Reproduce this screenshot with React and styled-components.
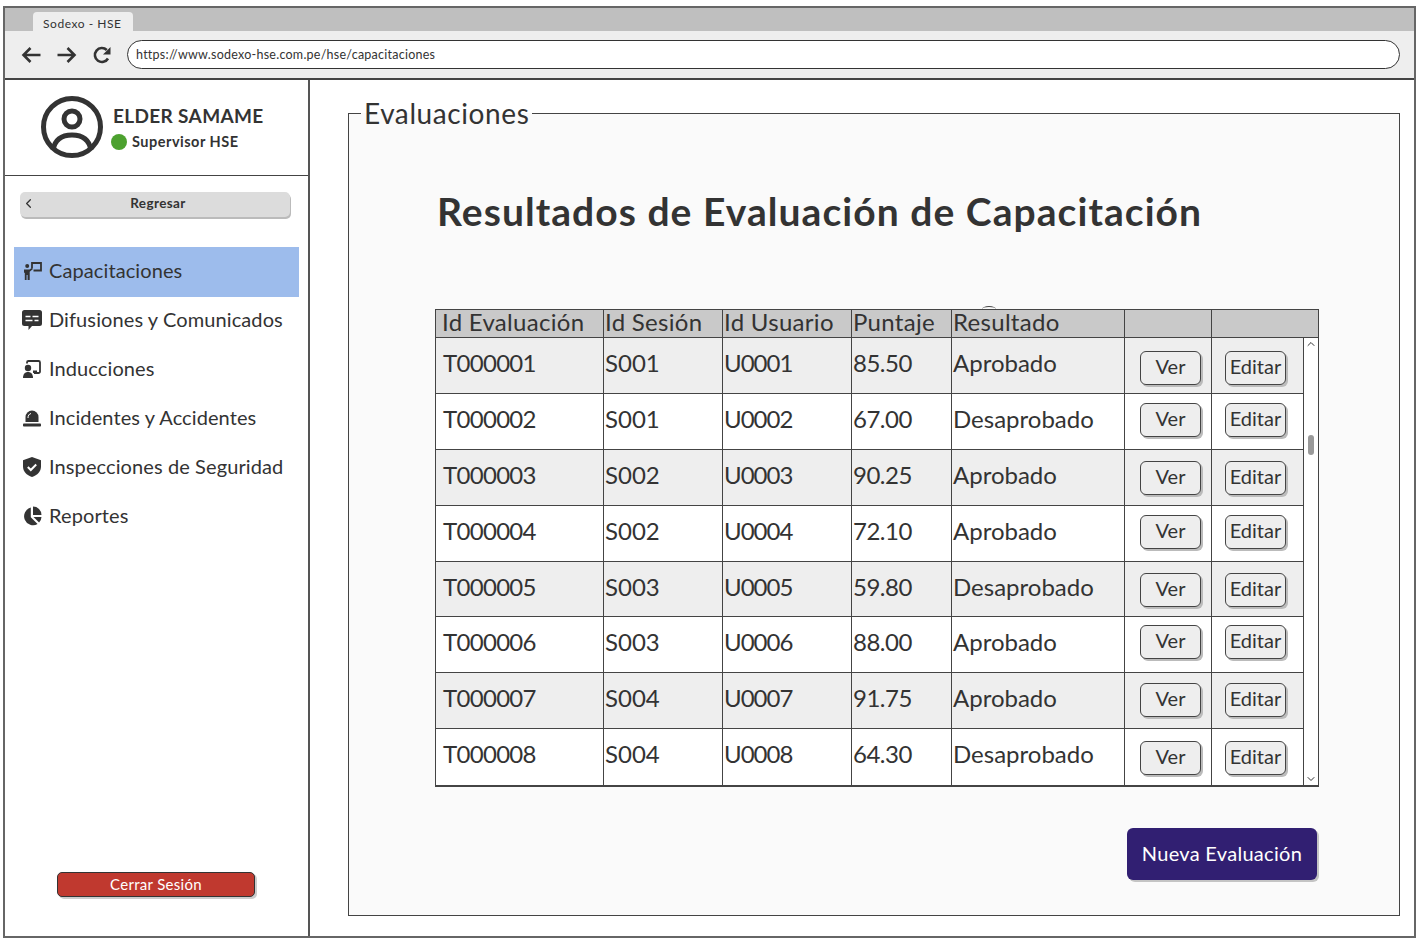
import React from 'react';
import styled, { createGlobalStyle } from 'styled-components';
import { LuChevronLeft, LuChevronUp, LuChevronDown } from 'react-icons/lu';

const GlobalStyle = createGlobalStyle`
  html, body {
    margin: 0;
    padding: 0;
    background: #fff;
    font-family: "Lato", "Open Sans", sans-serif;
    color: #333;
  }
  * { box-sizing: border-box; }
`;

const Browser = styled.div`
  width: 1413px;
  height: 932px;
  margin: 6px 0 0 3px;
  border: 2px solid #666;
  display: flex;
  flex-direction: column;
  background: #fff;
`;

const TabStrip = styled.div`
  height: 23px;
  background: #bfbfbf;
  padding: 4px 0 0 28px;
  display: flex;
`;

const Tab = styled.div`
  width: 100px;
  height: 19px;
  background: #eee;
  border-radius: 4px 4px 0 0;
  font-size: 12px;
  line-height: 23px;
  padding-left: 10px;
  letter-spacing: 0.55px;
`;

const Toolbar = styled.div`
  height: 49px;
  background: #eee;
  border-bottom: 2px solid #444;
  display: flex;
  align-items: center;
  padding: 0 14px 0 16px;
`;

const NavIcons = styled.div`
  display: flex;
  align-items: center;
  gap: 16px;
  margin-right: 16px;
  svg { display: block; }
`;

const AddressBar = styled.div`
  flex: 1;
  height: 29px;
  border: 1.5px solid #333;
  border-radius: 15px;
  background: #fff;
  font-size: 12.5px;
  line-height: 28px;
  padding-left: 8px;
  letter-spacing: 0.25px;
`;

const Body = styled.div`
  flex: 1;
  display: flex;
  min-height: 0;
`;

const Sidebar = styled.aside`
  width: 305px;
  border-right: 2px solid #555;
  display: flex;
  flex-direction: column;
`;

const Profile = styled.div`
  height: 96px;
  border-bottom: 1.5px solid #444;
  display: flex;
  align-items: center;
  padding: 0 0 2px 35px;
  gap: 9px;
`;

const ProfileText = styled.div`
  display: flex;
  flex-direction: column;
  gap: 5px;
  padding-top: 2px;
`;

const UserName = styled.div`
  font-size: 19px;
  font-weight: 700;
  letter-spacing: 0.35px;
  line-height: 24px;
`;

const RoleRow = styled.div`
  display: flex;
  align-items: center;
  gap: 5px;
  font-size: 14.5px;
  font-weight: 700;
  letter-spacing: 0.5px;
  margin-left: -2px;
  line-height: 18px;
`;

const StatusDot = styled.span`
  width: 16px;
  height: 16px;
  border-radius: 50%;
  background: #4ca12f;
`;

const BackButton = styled.button`
  margin: 16px 18px 0 15px;
  height: 25px;
  border: 0;
  border-radius: 5px;
  background: #dcdcdc;
  box-shadow: 1px 2px 0 #bbb;
  position: relative;
  font-family: inherit;
  font-size: 13.5px;
  font-weight: 700;
  letter-spacing: 0.4px;
  color: #333;
  padding: 0 0 4px 6px;
  svg {
    position: absolute;
    left: 1px;
    top: 4px;
  }
`;

const Menu = styled.nav`
  margin: 30px 9px 0 9px;
  display: flex;
  flex-direction: column;
`;

const MenuItem = styled.div`
  height: 49px;
  display: flex;
  align-items: center;
  gap: 7px;
  padding: 0 0 4px 8px;
  font-size: 20px;
  letter-spacing: 0.1px;
  background: ${(p) => (p.$active ? '#9dbcec' : 'transparent')};
  ${(p) => p.$active && 'height: 50px; margin-bottom: -1px;'}
`;

const MenuIcon = styled.span`
  width: 20px;
  height: 20px;
  flex: none;
  margin-top: 2px;
  svg { display: block; }
`;

const SidebarFoot = styled.div`
  margin-top: auto;
  padding: 0 0 39px 52px;
`;

const LogoutButton = styled.button`
  width: 198px;
  height: 25px;
  border: 1.5px solid #333;
  border-radius: 5px;
  background: #c0392f;
  color: #fff;
  font-family: inherit;
  font-size: 15px;
  letter-spacing: 0.3px;
  box-shadow: 2px 2px 0 #ccc;
  padding: 0 0 1px;
`;

const Main = styled.main`
  flex: 1;
  padding: 17px 14px 0 38px;
`;

const Panel = styled.fieldset`
  margin: 0;
  height: 819px;
  border: 1.5px solid #444;
  background: #fafafa;
  padding: 0;
`;

const PanelLegend = styled.legend`
  font-size: 28px;
  line-height: 33px;
  margin-left: 12px;
  padding: 0 3px;
  letter-spacing: 0.6px;
`;

const PanelBody = styled.div`
  padding-left: 86px;
`;

const Title = styled.h1`
  margin: 58px 0 0 2px;
  font-size: 39px;
  line-height: 47px;
  font-weight: 700;
  letter-spacing: 1.05px;
  white-space: nowrap;
`;

const Table = styled.div`
  margin-top: 74px;
  width: 884px;
  border: 1.5px solid #444;
  border-bottom-width: 2.5px;
  font-size: 24px;
`;

const HeadRow = styled.div`
  display: grid;
  grid-template-columns: 168px 119px 129px 100px 173px 87px 1fr;
  height: 28px;
  background: #c9c9c9;
  border-bottom: 1.5px solid #444;
`;

const HeadCell = styled.div`
  border-right: 1.5px solid #444;
  padding-left: ${(p) => p.$pad || 1}px;
  line-height: 23px;
  letter-spacing: 0.3px;
  white-space: nowrap;
  &:last-child { border-right: 0; }
`;

/* the little pen stroke that pokes above the header line */
const MarkedHeadCell = styled(HeadCell)`
  position: relative;
  &::after {
    content: '';
    position: absolute;
    left: 30px;
    top: -4px;
    width: 14px;
    height: 5px;
    border-top: 1.5px solid #444;
    border-radius: 50%;
  }
`;

const BodyWrap = styled.div`
  display: flex;
`;

const Rows = styled.div`
  flex: 1;
  min-width: 0;
`;

const Row = styled.div`
  display: grid;
  grid-template-columns: 168px 119px 129px 100px 173px 87px 1fr;
  height: 55.9px;
  background: ${(p) => (p.$odd ? '#eee' : '#fff')};
  border-bottom: 1.5px solid #444;
  &:last-child { border-bottom: 0; }
`;

const Cell = styled.div`
  border-right: 1.5px solid #444;
  padding-left: ${(p) => p.$pad || 1}px;
  letter-spacing: ${(p) => p.$spacing || 0}px;
  line-height: 50px;
  white-space: nowrap;
`;

const ActionCell = styled.div`
  border-right: 1.5px solid #444;
  display: flex;
  justify-content: flex-start;
  align-items: flex-start;
  padding: ${(p) => p.$top}px 0 0 ${(p) => p.$left}px;
  &:last-child { border-right: 0; }
`;

const RowButton = styled.button`
  width: 61px;
  height: 34px;
  border: 1.5px solid #444;
  border-radius: 6px;
  background: #eee;
  box-shadow: 2px 2px 0 #bbb;
  font-family: inherit;
  font-size: 20px;
  color: #333;
  padding: 0 0 4px;
`;

const Scrollbar = styled.div`
  width: 15px;
  background: #fff;
  border-left: 1.5px solid #444;
  display: flex;
  flex-direction: column;
  align-items: center;
  color: #333;
  svg { display: block; flex: none; }
`;

const Thumb = styled.div`
  width: 6px;
  height: 20px;
  margin: 85px 0 auto;
  border-radius: 3px;
  background: #999;
`;

const Footer = styled.div`
  display: flex;
  justify-content: flex-end;
  width: 882px;
  margin-top: 41px;
`;

const PrimaryButton = styled.button`
  width: 190px;
  height: 52px;
  border: 0;
  border-radius: 6px;
  background: #311f72;
  box-shadow: 2px 2px 0 #c4c4c4;
  color: #fff;
  font-family: inherit;
  font-size: 20px;
  letter-spacing: 0.3px;
  padding: 0 0 3px;
`;

const evaluations = [
  { id: 'T000001', session: 'S001', user: 'U0001', score: '85.50', result: 'Aprobado', top: 13 },
  { id: 'T000002', session: 'S001', user: 'U0002', score: '67.00', result: 'Desaprobado', top: 9 },
  { id: 'T000003', session: 'S002', user: 'U0003', score: '90.25', result: 'Aprobado', top: 11 },
  { id: 'T000004', session: 'S002', user: 'U0004', score: '72.10', result: 'Aprobado', top: 9 },
  { id: 'T000005', session: 'S003', user: 'U0005', score: '59.80', result: 'Desaprobado', top: 11 },
  { id: 'T000006', session: 'S003', user: 'U0006', score: '88.00', result: 'Aprobado', top: 8 },
  { id: 'T000007', session: 'S004', user: 'U0007', score: '91.75', result: 'Aprobado', top: 10 },
  { id: 'T000008', session: 'S004', user: 'U0008', score: '64.30', result: 'Desaprobado', top: 12 },
];

const ArrowLeft = () => (
  <svg width="20" height="18" viewBox="0 0 20 18" fill="none" stroke="#333" strokeWidth="2.6">
    <path d="M19.5 9H2.5M9.5 2l-7 7 7 7" />
  </svg>
);

const ArrowRight = () => (
  <svg width="20" height="18" viewBox="0 0 20 18" fill="none" stroke="#333" strokeWidth="2.6">
    <path d="M.5 9h17M10.5 2l7 7-7 7" />
  </svg>
);

const ReloadIcon = () => (
  <svg width="18" height="18" viewBox="0 0 18 18" fill="none" stroke="#333" strokeWidth="2.6">
    <path d="M15 12.5A7 7 0 1 1 13.8 4" />
    <path d="M17.5 1v7.5H10z" fill="#333" stroke="none" />
  </svg>
);

const UserIcon = () => (
  <svg width="64" height="64" viewBox="0 0 64 64" fill="none" stroke="#333" strokeWidth="5">
    <circle cx="32" cy="32" r="28.5" />
    <circle cx="32" cy="24" r="8" />
    <path d="M13 55c2-11 9-15 19-15s17 4 19 15" />
  </svg>
);

const TrainingIcon = () => (
  <svg width="20" height="20" viewBox="0 0 20 20" fill="#333">
    <circle cx="5.2" cy="5" r="2" />
    <path d="M2 8.500h5.500l2.500-1.800 1 1.300-3.300 2.700V19H5.600v-5H4.600v5H2.800v-7.500L2 12z" />
    <path d="M10 7V2h9v7.500h-7.500" fill="none" stroke="#333" strokeWidth="1.800" />
  </svg>
);

const ChatIcon = () => (
  <svg width="20" height="20" viewBox="0 0 20 20">
    <path d="M2.500 0h15A2.500 2.500 0 0 1 20 2.500v11a2.500 2.500 0 0 1-2.500 2.500H10l-3.500 4V16h-4A2.500 2.500 0 0 1 0 13.500v-11A2.500 2.500 0 0 1 2.500 0z" fill="#333" />
    <path d="M3.500 6.500h5M10.500 6.500h6M3.500 10.500h7M12.500 10.500h4" stroke="#fff" strokeWidth="1.600" />
  </svg>
);

const InductionIcon = () => (
  <svg width="20" height="20" viewBox="0 0 20 20" fill="#333">
    <path d="M5 4.500V3.500A1.500 1.500 0 0 1 6.500 2h10A1.500 1.500 0 0 1 18 3.500v9A1.500 1.500 0 0 1 16.500 14H12" fill="none" stroke="#333" strokeWidth="1.800" />
    <circle cx="6" cy="9" r="3.200" />
    <path d="M1 19c0-4 2-6 5-6s5 2 5 6z" />
    <rect x="11" y="11.500" width="4" height="2.500" />
  </svg>
);

const AlarmIcon = () => (
  <svg width="20" height="20" viewBox="0 0 20 20" fill="#333">
    <path d="M3.500 14V9a6.500 6.500 0 0 1 13 0v5z" />
    <path d="M6 10c0-2.500 1-4 3-4.500" fill="none" stroke="#fff" strokeWidth="1" />
    <rect x="1" y="15.500" width="18" height="3" rx=".8" />
  </svg>
);

const ShieldIcon = () => (
  <svg width="20" height="20" viewBox="0 0 20 20">
    <path d="M10 0l9 3.200v6.300c0 4.800-3.600 8.800-9 10.500C4.600 18.300 1 14.300 1 9.500V3.200z" fill="#333" />
    <path d="M5.800 10l3 3 5.400-5.500" fill="none" stroke="#fff" strokeWidth="2" />
  </svg>
);

const PieIcon = () => (
  <svg width="20" height="20" viewBox="0 0 20 20" fill="#333">
    <path d="M8.800 1.500v9.700l6.800 6.800A9 9 0 1 1 8.800 1.500z" />
    <path d="M11 .5a8.500 8.500 0 0 1 8.500 8.500H11z" />
    <path d="M11.500 11h8a8.500 8.500 0 0 1-2.400 5.600z" />
  </svg>
);

const menu = [
  { label: 'Capacitaciones', icon: <TrainingIcon />, active: true },
  { label: 'Difusiones y Comunicados', icon: <ChatIcon /> },
  { label: 'Inducciones', icon: <InductionIcon /> },
  { label: 'Incidentes y Accidentes', icon: <AlarmIcon /> },
  { label: 'Inspecciones de Seguridad', icon: <ShieldIcon /> },
  { label: 'Reportes', icon: <PieIcon /> },
];

export default function App() {
  return (
    <>
      <GlobalStyle />
      <Browser>
        <TabStrip>
          <Tab>Sodexo - HSE</Tab>
        </TabStrip>
        <Toolbar>
          <NavIcons>
            <ArrowLeft />
            <ArrowRight />
            <ReloadIcon />
          </NavIcons>
          <AddressBar>https://www.sodexo-hse.com.pe/hse/capacitaciones</AddressBar>
        </Toolbar>
        <Body>
          <Sidebar>
            <Profile>
              <UserIcon />
              <ProfileText>
                <UserName>ELDER SAMAME</UserName>
                <RoleRow>
                  <StatusDot />
                  Supervisor HSE
                </RoleRow>
              </ProfileText>
            </Profile>
            <BackButton>
              <LuChevronLeft size={15} />
              Regresar
            </BackButton>
            <Menu>
              {menu.map((item) => (
                <MenuItem key={item.label} $active={item.active}>
                  <MenuIcon>{item.icon}</MenuIcon>
                  {item.label}
                </MenuItem>
              ))}
            </Menu>
            <SidebarFoot>
              <LogoutButton>Cerrar Sesión</LogoutButton>
            </SidebarFoot>
          </Sidebar>
          <Main>
            <Panel>
              <PanelLegend>Evaluaciones</PanelLegend>
              <PanelBody>
                <Title>Resultados de Evaluación de Capacitación</Title>
                <Table>
                  <HeadRow>
                    <HeadCell $pad={6}>Id Evaluación</HeadCell>
                    <HeadCell>Id Sesión</HeadCell>
                    <HeadCell>Id Usuario</HeadCell>
                    <HeadCell>Puntaje</HeadCell>
                    <MarkedHeadCell>Resultado</MarkedHeadCell>
                    <HeadCell />
                    <HeadCell />
                  </HeadRow>
                  <BodyWrap>
                    <Rows>
                      {evaluations.map((row, i) => (
                        <Row key={row.id} $odd={i % 2 === 0}>
                          <Cell $pad={7} $spacing={-0.7}>{row.id}</Cell>
                          <Cell>{row.session}</Cell>
                          <Cell $spacing={-1}>{row.user}</Cell>
                          <Cell $spacing={-0.5}>{row.score}</Cell>
                          <Cell>{row.result}</Cell>
                          <ActionCell $top={row.top} $left={15}>
                            <RowButton>Ver</RowButton>
                          </ActionCell>
                          <ActionCell $top={row.top} $left={13}>
                            <RowButton>Editar</RowButton>
                          </ActionCell>
                        </Row>
                      ))}
                    </Rows>
                    <Scrollbar>
                      <LuChevronUp size={12} />
                      <Thumb />
                      <LuChevronDown size={12} />
                    </Scrollbar>
                  </BodyWrap>
                </Table>
                <Footer>
                  <PrimaryButton>Nueva Evaluación</PrimaryButton>
                </Footer>
              </PanelBody>
            </Panel>
          </Main>
        </Body>
      </Browser>
    </>
  );
}
